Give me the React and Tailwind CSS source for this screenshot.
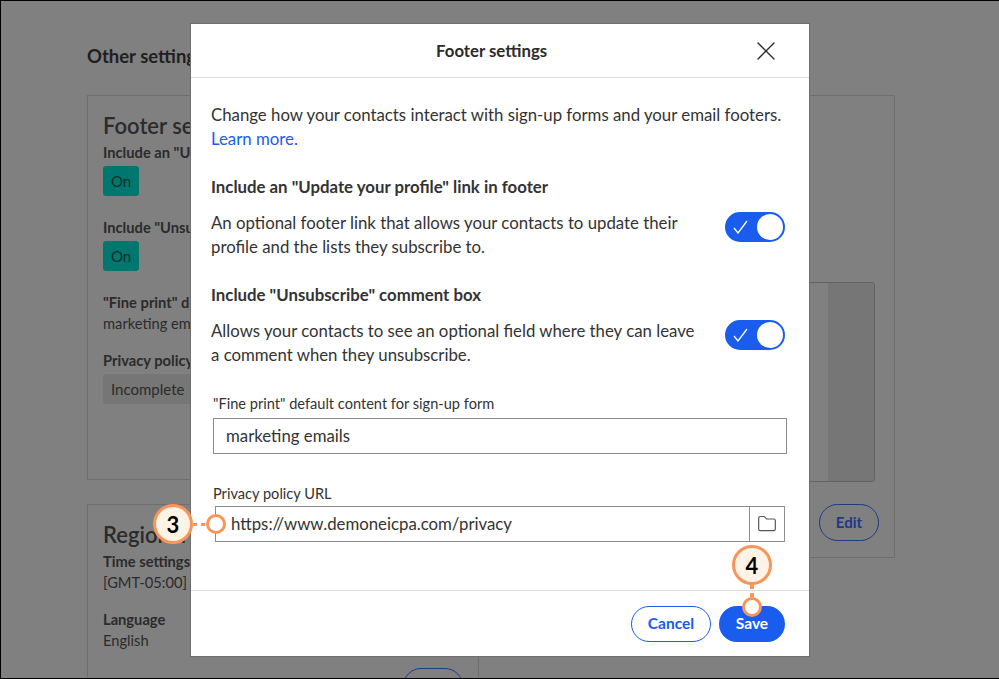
import { Folder, X } from 'lucide-react';

function OnBadge() {
  return (
    <div className="w-9 h-[30px] rounded-[3px] bg-[#00776e] text-[#0f2e2b] text-[15px] flex items-center justify-center">
      On
    </div>
  );
}

function Toggle() {
  return (
    <div className="mt-[1px] w-[60px] h-[30px] rounded-full bg-[#1a5ced] flex items-center justify-between pl-2 pr-[2px] shrink-0">
      <svg width="15" height="14" viewBox="0 0 15 14" fill="none" stroke="white" strokeWidth="1.3">
        <path d="M1 8l4 5L14 1" />
      </svg>
      <div className="w-[26px] h-[26px] rounded-full bg-white" />
    </div>
  );
}

function Dash({ vertical }) {
  return <div className={`${vertical ? 'w-1 h-1' : 'w-1 h-[3px]'} bg-[#f9955a] shrink-0`} />;
}

function Callout({ num, className, vertical }) {
  return (
    <div className={`absolute flex items-center ${vertical ? 'flex-col' : ''} ${className}`}>
      <div className="w-10 h-10 rounded-full bg-[#fff3e6] border-[3px] border-[#f9955a] flex items-center justify-center text-[22px] font-bold text-black shrink-0">
        {num}
      </div>
      <div className={`flex ${vertical ? 'flex-col h-3' : 'w-[13px]'} gap-1`}>
        <Dash vertical={vertical} />
        <Dash vertical={vertical} />
      </div>
      <div className="w-5 h-5 rounded-full bg-white border-[3px] border-[#f9955a] shrink-0" />
    </div>
  );
}

function Row({ title, text }) {
  return (
    <>
      <h4 className="mt-[24px] font-bold">{title}</h4>
      <div className="mt-[12px] flex items-start justify-between pr-[4px]">
        <p className="w-[490px]">{text}</p>
        <Toggle />
      </div>
    </>
  );
}

export default function App() {
  return (
    <div className='relative w-[999px] h-[679px] overflow-hidden bg-[#808080] border-t border-l border-b border-black text-[#2b2b2b] font-["Lato",sans-serif]'>
      {/* Page behind the modal */}
      <div className="pl-[86px] pt-[43px] w-[894px]">
        <h2 className="text-[18.5px] leading-[24px] font-bold text-[#1f1f1f]">Other settings</h2>
        <div className="mt-[27px] flex">
          <div className="w-[392px] flex flex-col gap-6 shrink-0">
            <div className="h-[385px] border border-[#6e6e6e] px-[15px] pt-[16px] text-[14.7px] leading-[18px]">
              <h3 className="text-[22px] leading-[28px] font-semibold">Footer settings</h3>
              <p className="mt-[3px] font-bold">Include an "Update your profile"</p>
              <div className="mt-[5px]"><OnBadge /></div>
              <p className="mt-[22px] font-bold">Include "Unsubscribe"</p>
              <div className="mt-[5px]"><OnBadge /></div>
              <p className="mt-[22px] font-bold">"Fine print" default</p>
              <p className="mt-[3px]">marketing emails</p>
              <p className="mt-[19px] font-bold">Privacy policy URL</p>
              <div className="mt-[5px] w-[120px] h-[30px] rounded-[3px] bg-[#767676] text-[15px] flex items-center pl-2">Incomplete</div>
            </div>
            <div className="h-[220px] border border-[#6e6e6e] px-[15px] pt-[16px] text-[14.7px] leading-[18px]">
              <h3 className="text-[22px] leading-[28px] font-semibold">Regional</h3>
              <p className="mt-[3px] font-bold">Time settings</p>
              <p className="mt-[3px]">[GMT-05:00] Eastern</p>
              <p className="mt-[19px] font-bold">Language</p>
              <p className="mt-[3px]">English</p>
              <div className="mt-[19px] ml-[300px] w-[60px] h-9 rounded-full border border-[#1c3a85]" />
            </div>
          </div>
          <div className="flex-1 h-[463px] border-y border-r border-[#6e6e6e] pt-[186px] pr-[19px] flex flex-col items-end">
            <div className="w-[374px] h-[200px] border border-[#626262] rounded-r-[3px] flex justify-end shrink-0">
              <div className="w-[46px] h-full bg-[#767676] rounded-r-[3px]" />
            </div>
            <div className="mt-[22px] -mr-[4px] w-[60px] h-[37px] rounded-full border border-[#1c3a85] text-[#1c3a85] text-[15px] font-bold flex items-center justify-center shrink-0">Edit</div>
          </div>
        </div>
      </div>

      {/* Modal */}
      <div className="absolute left-[190px] top-[23px] w-[618px] h-[632px] bg-white flex flex-col outline outline-[#6e6e6e]">
        <div className="h-[54px] shrink-0 border-b border-[#dedede] flex items-center justify-between pl-[245px] pr-[27px]">
          <span className="text-[16.8px] font-bold">Footer settings</span>
          <X size={32} strokeWidth={1} className="text-[#2b2b2b]" />
        </div>
        <div className="flex-1 px-5 pt-[25px] text-[16.8px] leading-[24px] text-[#333]">
          <p>Change how your contacts interact with sign-up forms and your email footers. <span className="text-[#1a5ced]">Learn more.</span></p>
          <Row
            title={'Include an "Update your profile" link in footer'}
            text="An optional footer link that allows your contacts to update their profile and the lists they subscribe to."
          />
          <Row
            title={'Include "Unsubscribe" comment box'}
            text="Allows your contacts to see an optional field where they can leave a comment when they unsubscribe."
          />
          <label className="block mt-[28px] ml-[2px] text-[14.6px] leading-[18px]">"Fine print" default content for sign-up form</label>
          <div className="mt-[5px] ml-[2px] w-[574px] h-9 border border-[#8c8c8c] flex items-center pl-3">marketing emails</div>
          <label className="block mt-[31px] ml-[2px] text-[14.6px] leading-[18px]">Privacy policy URL</label>
          <div className="mt-[3px] ml-[4px] w-[570px] h-9 border border-[#8c8c8c] flex items-center">
            <span className="flex-1 pl-[15px]">https://www.demoneicpa.com/privacy</span>
            <div className="w-[35px] h-full border-l border-[#8c8c8c] flex items-center justify-center">
              <Folder size={20} strokeWidth={1.4} className="text-[#555]" />
            </div>
          </div>
        </div>
        <div className="h-[66px] shrink-0 border-t border-[#dedede] flex items-center justify-end gap-2 pr-[24px]">
          <button className="w-[80px] h-9 rounded-full border border-[#1a5ced] text-[#1a5ced] text-[15.5px] font-bold">Cancel</button>
          <button className="w-[66px] h-9 rounded-full bg-[#1a5ced] text-white text-[15.5px] font-bold">Save</button>
        </div>
      </div>

      {/* Tutorial callouts */}
      <Callout num="3" className="left-[152px] top-[503px]" />
      <Callout num="4" vertical className="left-[731px] top-[544px]" />
    </div>
  );
}
